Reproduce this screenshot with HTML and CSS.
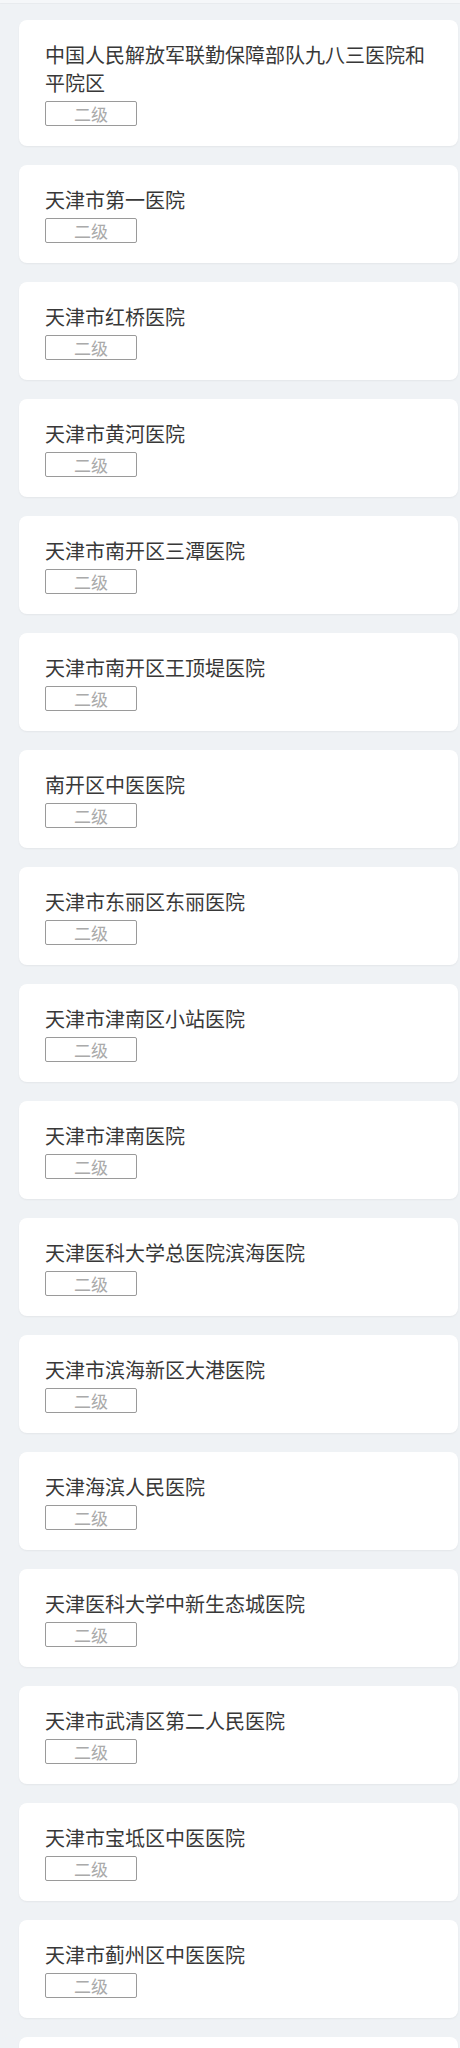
FILE: index.html
```html
<!DOCTYPE html>
<html lang="zh-CN">
<head>
<meta charset="utf-8">
<title>医院列表</title>
<link rel="stylesheet" href="styles.css">
</head>
<body>
<div class="topstrip"></div>
<div class="list">
  <div class="card"><div class="name">中国人民解放军联勤保障部队九八三医院和平院区</div><div class="tag">二级</div></div>
  <div class="card"><div class="name">天津市第一医院</div><div class="tag">二级</div></div>
  <div class="card"><div class="name">天津市红桥医院</div><div class="tag">二级</div></div>
  <div class="card"><div class="name">天津市黄河医院</div><div class="tag">二级</div></div>
  <div class="card"><div class="name">天津市南开区三潭医院</div><div class="tag">二级</div></div>
  <div class="card"><div class="name">天津市南开区王顶堤医院</div><div class="tag">二级</div></div>
  <div class="card"><div class="name">南开区中医医院</div><div class="tag">二级</div></div>
  <div class="card"><div class="name">天津市东丽区东丽医院</div><div class="tag">二级</div></div>
  <div class="card"><div class="name">天津市津南区小站医院</div><div class="tag">二级</div></div>
  <div class="card"><div class="name">天津市津南医院</div><div class="tag">二级</div></div>
  <div class="card"><div class="name">天津医科大学总医院滨海医院</div><div class="tag">二级</div></div>
  <div class="card"><div class="name">天津市滨海新区大港医院</div><div class="tag">二级</div></div>
  <div class="card"><div class="name">天津海滨人民医院</div><div class="tag">二级</div></div>
  <div class="card"><div class="name">天津医科大学中新生态城医院</div><div class="tag">二级</div></div>
  <div class="card"><div class="name">天津市武清区第二人民医院</div><div class="tag">二级</div></div>
  <div class="card"><div class="name">天津市宝坻区中医医院</div><div class="tag">二级</div></div>
  <div class="card"><div class="name">天津市蓟州区中医医院</div><div class="tag">二级</div></div>
  <div class="card card-empty"></div>
</div>
</body>
</html>
```

FILE: styles.css
```css
html, body {
  margin: 0;
  padding: 0;
  background: #eff2f5;
}
body {
  font-family: "Noto Sans CJK SC", "Noto Sans", sans-serif;
  color: #333;
}
.topstrip {
  height: 3px;
  background: #f5f7f9;
  box-shadow: 0 1px 1px rgba(0, 0, 0, 0.03);
}
.list {
  display: flex;
  flex-direction: column;
  gap: 19px;
  padding: 17px 2px 0 19px;
}
.card {
  background: #fff;
  border-radius: 8px;
  padding: 21px 26px 20px;
  box-shadow: 0 1px 2px rgba(0, 0, 0, 0.05);
}
.card-empty {
  height: 57px;
}
.name {
  font-size: 20px;
  line-height: 28px;
  color: #383838;
}
.tag {
  margin-top: 4px;
  box-sizing: border-box;
  width: 92px;
  height: 25px;
  border: 1px solid #9a9a9a;
  border-radius: 2px;
  color: #aaa;
  font-size: 17px;
  line-height: 23px;
  text-align: center;
}
```
